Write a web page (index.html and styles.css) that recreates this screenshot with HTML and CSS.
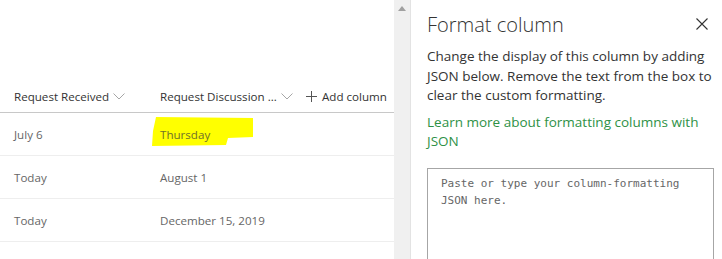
FILE: index.html
```html
<!DOCTYPE html>
<html>
<head>
<meta charset="utf-8">
<link rel="stylesheet" href="styles.css">
</head>
<body>
<div class="app">
  <div class="list">
    <div class="list-top"></div>
    <div class="row head">
      <div class="cell c1">Request Received<svg class="chev" width="12" height="7" viewBox="0 0 12 7"><path d="M0.5 0.5 L6 6 L11.5 0.5" fill="none" stroke="#a6a6a6" stroke-width="1"/></svg></div>
      <div class="cell c2">Request Discussion ...<svg class="chev" width="12" height="7" viewBox="0 0 12 7"><path d="M0.5 0.5 L6 6 L11.5 0.5" fill="none" stroke="#a6a6a6" stroke-width="1"/></svg></div>
      <div class="cell c3"><svg class="plus" width="11" height="11" viewBox="0 0 11 11"><path d="M5.5 0 V11 M0 5.5 H11" stroke="#555" stroke-width="1"/></svg>Add column</div>
    </div>
    <div class="row">
      <div class="cell c1">July 6</div>
      <div class="cell c2 hl">Thursday<svg class="marker" width="104" height="32" viewBox="0 0 104 32"><polygon points="4,0 101,1 101,20 76,21 74,28 0,29 1,14" fill="#ffff00"/></svg></div>
    </div>
    <div class="row">
      <div class="cell c1">Today</div>
      <div class="cell c2">August 1</div>
    </div>
    <div class="row">
      <div class="cell c1">Today</div>
      <div class="cell c2">December 15, 2019</div>
    </div>
  </div>
  <div class="scroll"><svg width="8" height="5" viewBox="0 0 8 5"><polygon points="4,0 8,5 0,5" fill="#a0a0a0"/></svg></div>
  <div class="panel">
    <div class="title-row">
      <h1 class="title">Format column</h1>
      <svg class="close" width="12" height="12" viewBox="0 0 12 12"><path d="M0.5 0.5 L11.5 11.5 M11.5 0.5 L0.5 11.5" stroke="#333" stroke-width="1.1"/></svg>
    </div>
    <p class="desc">Change the display of this column by adding JSON below. Remove the text from the box to clear the custom formatting.</p>
    <a class="link">Learn more about formatting columns with JSON</a>
    <div class="box">Paste or type your column-formatting JSON here.</div>
  </div>
</div>
</body>
</html>
```

FILE: styles.css
```css
html, body { margin: 0; padding: 0; background: #fff; }
body { font-family: "Open Sans", "Noto Sans", sans-serif; }
.app { display: flex; width: 722px; height: 259px; overflow: hidden; }

.list { width: 394px; flex: none; }
.list-top { height: 80px; }
.row { display: flex; align-items: center; height: 42px; border-bottom: 1px solid #eeeeee; font-size: 11.6px; color: #666; }
.row.head { height: 31px; align-items: center; border-bottom: 1px solid #c8c8c8; color: #333; padding-top: 1px; }
.cell { display: flex; align-items: center; white-space: nowrap; }
.c1 { width: 160px; padding-left: 14px; box-sizing: border-box; flex: none; }
.c2 { width: 146px; flex: none; position: relative; }
.c3 { flex: none; }
.chev { margin-left: 4px; }
.plus { margin-right: 5px; }
.hl { z-index: 0; }
.marker { position: absolute; left: -8px; top: -10px; z-index: -1; }
.row .hl { color: #70702a; }

.scroll { width: 17px; flex: none; background: #f0f0f0; border-right: 1px solid #e3e3e3; display: flex; justify-content: center; padding-top: 6px; box-sizing: border-box; }
.scroll svg { display: block; }

.panel { flex: 1; padding: 10px 0 0 16px; color: #333; }
.title-row { display: flex; align-items: center; justify-content: space-between; padding-right: 14px; height: 28px; }
.title { margin: 0; font-size: 20px; font-weight: 300; color: #333; }
.desc { margin: 9px 0 0; font-size: 13.5px; line-height: 19.5px; width: 290px; }
.link { display: block; margin-top: 7px; font-size: 13.5px; line-height: 19.5px; color: #2e9146; width: 290px; }
.box { margin-top: 16px; width: 287px; height: 100px; box-sizing: border-box; border: 1px solid #a6a6a6; padding: 6px 13px; font-family: "DejaVu Sans Mono", monospace; font-size: 11px; line-height: 17px; color: #666; }
```
